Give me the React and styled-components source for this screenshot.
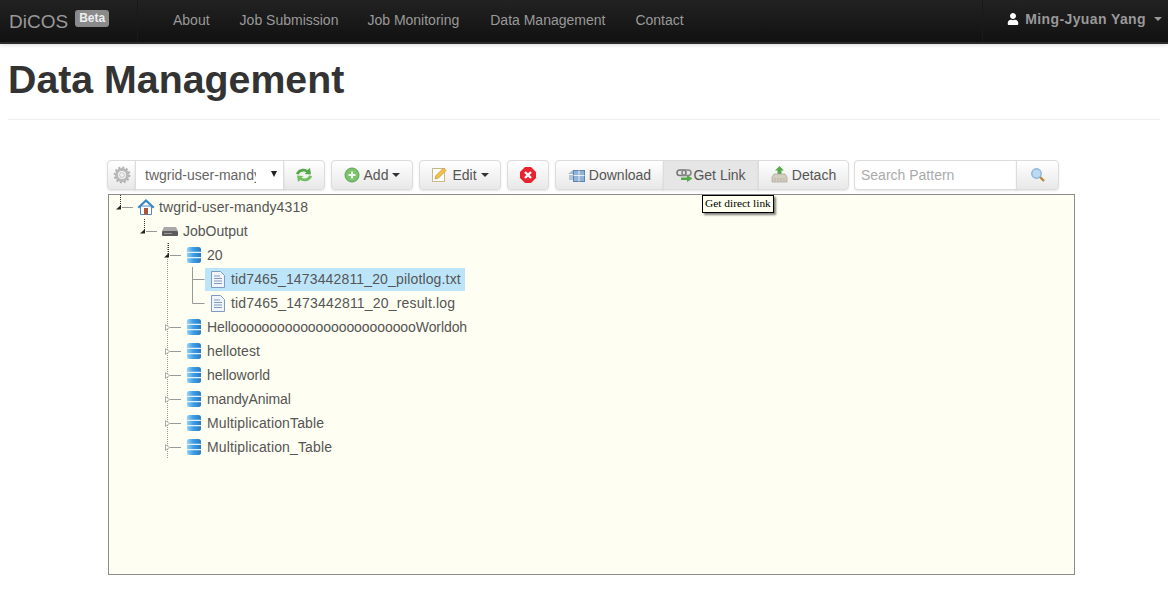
import React from "react"
import styled, { createGlobalStyle, css } from "styled-components"
import { FaUser } from "react-icons/fa"

const GlobalStyle = createGlobalStyle`
  html, body {
    margin: 0;
    background: #fff;
    font-family: "Liberation Sans", Arial, sans-serif;
    font-size: 14px;
    color: #333;
  }
`

const Navbar = styled.nav`
  display: flex;
  align-items: center;
  height: 42px;
  background: linear-gradient(#222222, #111111);
  border-bottom: 2px solid #2b2b2b;
  box-shadow: 0 1px 4px rgba(0, 0, 0, 0.15);
  color: #999;
`
const Brand = styled.div`
  display: flex;
  align-items: flex-start;
  width: 138px;
  height: 100%;
  box-sizing: border-box;
  padding-left: 9px;
  border-right: 1px solid #191919;
  font-size: 19px;
  line-height: 44px;
`
const BetaLabel = styled.span`
  margin: 10px 0 0 7px;
  padding: 0 4px;
  height: 17px;
  background: #8a8a8a;
  border-radius: 3px;
  color: #eee;
  font-size: 12px;
  font-weight: bold;
  line-height: 16px;
`
const NavLinks = styled.div`
  display: flex;
  flex: 1;
  padding: 0 0 3px 20px;
`
const NavLink = styled.a`
  padding: 0 15px;
  margin-right: ${({ $nudge }) => $nudge || 0}px;
`
const UserMenu = styled.div`
  display: flex;
  align-items: center;
  gap: 6px;
  height: 100%;
  padding: 0 6px 4px 24px;
  box-sizing: border-box;
  border-left: 1px solid #191919;
  font-weight: bold;
  letter-spacing: 0.4px;
  svg {
    color: #fff;
  }
`
const Caret = styled.span`
  display: inline-block;
  margin-left: ${({ $gap }) => $gap || 0}px;
  border-top: 4px solid ${({ $color }) => $color || "#333"};
  border-left: 4px solid transparent;
  border-right: 4px solid transparent;
`

const PageHeader = styled.header`
  margin: 0 8px;
  height: 75px;
  border-bottom: 1px solid #eee;
`
const Title = styled.h1`
  margin: 0;
  font-size: 39.3px;
  font-weight: bold;
  line-height: 70px;
`

const Main = styled.main`
  position: relative;
  margin: 40px 93px 0 107px;
`
const Toolbar = styled.div`
  display: flex;
  gap: 6px;
  height: 30px;
  margin-bottom: 4px;
`
const Group = styled.div`
  display: flex;
  margin-left: ${({ $pull }) => ($pull ? -1 : 0)}px;
`
const buttonFace = css`
  display: flex;
  align-items: center;
  justify-content: center;
  box-sizing: border-box;
  height: 30px;
  padding-bottom: 1px;
  border: 1px solid #dcdcdc;
  margin-left: -1px;
  color: #555;
  background: linear-gradient(#ffffff, #e8e8e8);
  box-shadow: 0 1px 2px rgba(0, 0, 0, 0.1);
  &:first-child {
    margin-left: 0;
    border-radius: 4px 0 0 4px;
  }
  &:last-child {
    border-radius: 0 4px 4px 0;
  }
  &:only-child {
    border-radius: 4px;
  }
`
const Button = styled.div`
  ${buttonFace}
  width: ${({ $width }) => $width}px;
  gap: ${({ $gap }) => ($gap === undefined ? 4 : $gap)}px;
  ${({ $active }) =>
    $active &&
    css`
      background: #e6e6e6;
    `}
`
const SelectBox = styled.div`
  ${buttonFace}
  justify-content: flex-start;
  position: relative;
  width: 149px;
  padding-left: 9px;
  background: #fff;
  color: #666;
`
const SelectText = styled.span`
  display: block;
  width: 111px;
  overflow: hidden;
  white-space: nowrap;
`
const SelectArrow = styled.span`
  position: absolute;
  right: 6px;
  top: 10px;
  border-top: 6px solid #222;
  border-left: 3px solid transparent;
  border-right: 3px solid transparent;
`
const SearchInput = styled.div`
  ${buttonFace}
  justify-content: flex-start;
  width: 163px;
  padding-left: 6px;
  background: #fff;
  color: #aaa;
`

const TreeBox = styled.div`
  margin-left: 1px;
  height: 381px;
  box-sizing: border-box;
  border: 1px solid #8c8c8c;
  background: #fefef2;
`
const Row = styled.div`
  display: flex;
  height: 24px;
  align-items: center;
`
const Node = styled.div`
  display: flex;
  align-items: center;
  height: ${({ $selected }) => ($selected ? "23px" : "24px")};
  padding: 0 4px;
  gap: ${({ $leaf }) => ($leaf ? 6 : 4)}px;
  color: #555;
  white-space: nowrap;
  letter-spacing: ${({ $tracking }) => $tracking || 0}px;
  background: ${({ $selected }) => ($selected ? "#bde5fa" : "transparent")};
  svg {
    flex: none;
    margin-left: ${({ $leaf }) => ($leaf ? 2 : 0)}px;
  }
`
const Tooltip = styled.div`
  position: absolute;
  left: 595px;
  top: 35px;
  padding: 0 2px;
  height: 16px;
  background: #fffff0;
  border: 1px solid #000;
  box-shadow: 2px 2px 2px rgba(0, 0, 0, 0.5);
  color: #000;
  font-family: "Liberation Serif", serif;
  font-size: 11.4px;
  line-height: 15px;
  white-space: nowrap;
`

// icons, drawn small like the old silk/fugue sets
const GearIcon = () => (
  <svg width="18" height="18" viewBox="0 0 18 18">
    <circle cx="9" cy="9" r="5.5" fill="none" stroke="#b9b9b9" strokeWidth="3" />
    <circle cx="9" cy="9" r="7.400" fill="none" stroke="#b0b0b0" strokeWidth="2" strokeDasharray="2 1.870" />
    <circle cx="9" cy="9" r="2.400" fill="#f2f2f2" stroke="#999" strokeWidth=".5" />
  </svg>
)
const RefreshIcon = () => (
  <svg width="18" height="16" viewBox="0 0 18 16">
    <path d="M1 7C2 2.500 8 0 12.500 3L15 1l1 6.500-6.500-.5 2-1.800C8.500 4 5 4.500 4 7.500z" fill="#55a84a" />
    <path d="M17 9c-1 4.500-7 7-11.500 4L3 15 2 8.500l6.500.5-2 1.800c3 1.200 6.500.7 7.500-2.300z" fill="#74bf62" />
  </svg>
)
const AddIcon = () => (
  <svg width="16" height="16" viewBox="0 0 16 16">
    <circle cx="8" cy="8" r="7" fill="#7cc36e" stroke="#5aa552" />
    <path d="M8 4.500v7M4.500 8h7" stroke="#f2f7ee" strokeWidth="2" />
  </svg>
)
const EditIcon = () => (
  <svg width="17" height="17" viewBox="0 0 17 17">
    <rect x="1.500" y="2.500" width="12" height="13" fill="#fff" stroke="#c9b98a" />
    <path d="M4 13l1-3.500L12.500 2l2.500 2.500L7.500 12z" fill="#f2c04b" stroke="#c8912c" strokeWidth=".7" />
  </svg>
)
const DeleteIcon = () => (
  <svg width="16" height="16" viewBox="0 0 16 16">
    <path d="M5 0h6l5 5v6l-5 5H5l-5-5V5z" fill="#e8232f" />
    <path d="M5 5l6 6M11 5l-6 6" stroke="#fff" strokeWidth="2.400" />
  </svg>
)
const DownloadIcon = () => (
  <svg width="17" height="15" viewBox="0 0 17 15">
    <path d="M0 7l5-4h4v4z" fill="#a9bccf" />
    <rect x="1" y="8" width="5" height="5" fill="#b5c5d5" />
    <rect x="5.500" y="3.500" width="11" height="11" fill="#8fb4d8" stroke="#5b86b0" />
    <path d="M5.500 8.500h11M11 3.500v11" stroke="#e6eff7" />
  </svg>
)
const LinkIcon = () => (
  <svg width="17" height="14" viewBox="0 0 17 14">
    <rect x="1" y="2" width="9" height="5.500" rx="2.700" fill="none" stroke="#777" strokeWidth="1.600" />
    <rect x="6" y="2" width="9" height="5.500" rx="2.700" fill="none" stroke="#888" strokeWidth="1.600" />
    <path d="M5 9.500h6V7l5.500 3.500L11 14v-2H5z" fill="#55a84a" />
  </svg>
)
const DetachIcon = () => (
  <svg width="17" height="17" viewBox="0 0 17 17">
    <path d="M8.500 0l4.500 4.500h-2.500V9h-4V4.500H4z" fill="#58a94e" />
    <path d="M3 8h11l2 3v5H1v-5z" fill="#d4cfc0" stroke="#a8a293" strokeWidth=".7" />
    <path d="M4 12v3M7 12v3M10 12v3M13 12v3" stroke="#a8a293" strokeWidth=".7" />
  </svg>
)
const SearchGlass = () => (
  <svg width="16" height="16" viewBox="0 0 16 16">
    <path d="M9.500 9.500l4.500 4.500" stroke="#b8873e" strokeWidth="2.400" />
    <circle cx="6.500" cy="6.500" r="4.700" fill="#bcd9f4" stroke="#8db3da" strokeWidth="1.400" />
  </svg>
)
const HomeIcon = () => (
  <svg width="18" height="18" viewBox="0 0 18 18">
    <path d="M3.500 8h11v8.500h-11z" fill="#fff" stroke="#4d8dc4" />
    <path d="M9 1L.5 9l1.500 1.500L9 4l7 6.500L17.500 9z" fill="#3d86c6" />
    <rect x="7" y="10" width="4" height="6.500" fill="#a8553a" />
  </svg>
)
const DriveIcon = () => (
  <svg width="18" height="18" viewBox="0 0 18 18">
    <path d="M3 5h12l2 4H1z" fill="#a9a9a9" />
    <rect x="1" y="9" width="16" height="5" rx="1" fill="#5c5c5c" />
    <path d="M3 11.500h8" stroke="#999" />
  </svg>
)
const DatabaseIcon = () => (
  <svg width="18" height="18" viewBox="0 0 18 18">
    <defs>
      <linearGradient id="dbFace" x1="0" x2="1" y1="0" y2="0">
        <stop offset="0" stopColor="#8fd0f6" />
        <stop offset="0.45" stopColor="#3f9fe3" />
        <stop offset="1" stopColor="#2a78c4" />
      </linearGradient>
    </defs>
    <rect x="2" y="1" width="14" height="16" rx="2.500" fill="url(#dbFace)" />
    <path d="M2 6.300h14M2 11.700h14" fill="none" stroke="#e3f3fd" strokeWidth="1.200" />
  </svg>
)
const FileIcon = () => (
  <svg width="14" height="17" viewBox="0 0 14 17">
    <path d="M.5.500h9l4 4v12H.5z" fill="#f1f5fa" stroke="#7f9cc0" />
    <path d="M3 5h6M3 7.500h8M3 10h8M3 12.500h8" stroke="#7f9cc0" />
  </svg>
)

// tree lines for one row: dotted guides of the ancestors, then this node's own joint
const Connector = ({ depth, state, guides = [], elbow }) => {
  const x = 12 + 24 * depth
  return (
    <svg width={24 + 24 * depth} height="24" style={{ flex: "none" }}>
      {guides.map((g) => (
        <path key={g} d={`M${10.5 + 24 * g} 0V24`} stroke="#999" strokeDasharray="1 1" fill="none" />
      ))}
      {state === "open" && (
        <>
          <path d={`M${x - 0.5} 0V11`} stroke="#333" strokeDasharray="1 1" />
          <path d={`M${x - 5} 14.500l5-4.500v4.500z`} fill="#222" />
          <path d={`M${x + 1} 12.500h11`} stroke="#999" />
        </>
      )}
      {state === "closed" && (
        <>
          <path d={`M${x - 3.500} 9.500l4 3-4 3z`} fill="#fffff5" stroke="#aaa" />
          <path d={`M${x + 1} 12.500h11`} stroke="#999" />
        </>
      )}
      {state === "leaf" && (
        <path
          d={elbow ? `M${x - 0.5} 0V12.500h12` : `M${x - 0.5} 0V24M${x - 0.5} 12.500h12`}
          stroke="#999"
          fill="none"
        />
      )}
    </svg>
  )
}

// tracking: the reference's hinted glyphs run a little wider or narrower per label
const rows = [
  { depth: 0, state: "open", icon: <HomeIcon />, label: "twgrid-user-mandy4318", tracking: 0.1 },
  { depth: 1, state: "open", icon: <DriveIcon />, label: "JobOutput" },
  { depth: 2, state: "open", icon: <DatabaseIcon />, label: "20", guides: [2] },
  { depth: 3, state: "leaf", icon: <FileIcon />, label: "tid7465_1473442811_20_pilotlog.txt", guides: [2], selected: true, leaf: true, tracking: 0.15 },
  { depth: 3, state: "leaf", icon: <FileIcon />, label: "tid7465_1473442811_20_result.log", guides: [2], elbow: true, leaf: true, tracking: 0.18 },
  { depth: 2, state: "closed", icon: <DatabaseIcon />, label: "HellooooooooooooooooooooooooWorldoh", guides: [2], tracking: -0.08 },
  { depth: 2, state: "closed", icon: <DatabaseIcon />, label: "hellotest", guides: [2], tracking: 0.1 },
  { depth: 2, state: "closed", icon: <DatabaseIcon />, label: "helloworld", guides: [2] },
  { depth: 2, state: "closed", icon: <DatabaseIcon />, label: "mandyAnimal", guides: [2], tracking: -0.1 },
  { depth: 2, state: "closed", icon: <DatabaseIcon />, label: "MultiplicationTable", guides: [2], tracking: 0.15 },
  { depth: 2, state: "closed", icon: <DatabaseIcon />, label: "Multiplication_Table", guides: [2], tracking: 0.15 },
]

const App = () => (
  <>
    <GlobalStyle />
    <Navbar>
      <Brand>
        DiCOS
        <BetaLabel>Beta</BetaLabel>
      </Brand>
      <NavLinks>
        <NavLink>About</NavLink>
        <NavLink $nudge={-1}>Job Submission</NavLink>
        <NavLink $nudge={1}>Job Monitoring</NavLink>
        <NavLink>Data Management</NavLink>
        <NavLink>Contact</NavLink>
      </NavLinks>
      <UserMenu>
        <FaUser size={12} />
        Ming-Jyuan Yang
        <Caret $color="#999" $gap={2} />
      </UserMenu>
    </Navbar>
    <PageHeader>
      <Title>Data Management</Title>
    </PageHeader>
    <Main>
      <Toolbar>
        <Group>
          <Button $width={29}>
            <GearIcon />
          </Button>
          <SelectBox>
            <SelectText>twgrid-user-mandy4318</SelectText>
            <SelectArrow />
          </SelectBox>
          <Button $width={42}>
            <RefreshIcon />
          </Button>
        </Group>
        <Group>
          <Button $width={82}>
            <AddIcon />
            Add
            <Caret />
          </Button>
        </Group>
        <Group>
          <Button $width={82}>
            <EditIcon />
            Edit
            <Caret />
          </Button>
        </Group>
        <Group>
          <Button $width={42}>
            <DeleteIcon />
          </Button>
        </Group>
        <Group>
          <Button $width={109}>
            <DownloadIcon />
            Download
          </Button>
          <Button $width={96} $gap={0} $active>
            <LinkIcon />
            Get Link
          </Button>
          <Button $width={91}>
            <DetachIcon />
            Detach
          </Button>
        </Group>
        <Group $pull>
          <SearchInput>Search Pattern</SearchInput>
          <Button $width={43}>
            <SearchGlass />
          </Button>
        </Group>
      </Toolbar>
      <TreeBox>
        {rows.map((row) => (
          <Row key={row.label}>
            <Connector depth={row.depth} state={row.state} guides={row.guides} elbow={row.elbow} />
            <Node $selected={row.selected} $leaf={row.leaf} $tracking={row.tracking}>
              {row.icon}
              {row.label}
            </Node>
          </Row>
        ))}
      </TreeBox>
      <Tooltip>Get direct link</Tooltip>
    </Main>
  </>
)

export default App
